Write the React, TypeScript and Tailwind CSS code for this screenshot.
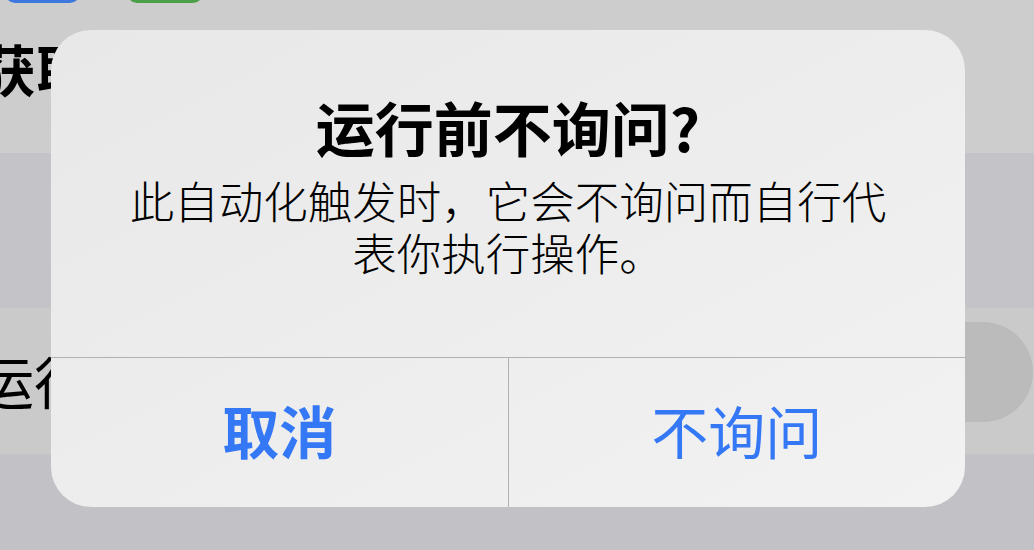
import React from "react";

export default function App() {
  const font = { fontFamily: '"Noto Sans CJK SC", "Noto Sans", sans-serif' };
  return (
    <div
      className="relative w-[1034px] h-[550px] overflow-hidden bg-[#c2c2c6] flex flex-col"
      style={font}
    >
      {/* Background page */}
      <div className="h-[153px] bg-[#cdcdcd] flex flex-col">
        <div className="flex h-[3px] overflow-visible">
          <div className="ml-[5px] w-[75px] h-[20px] -mt-[17px] rounded-[12px] bg-[#3d78de]" />
          <div className="ml-[47px] w-[76px] h-[20px] -mt-[17px] rounded-[12px] bg-[#4b9f46]" />
        </div>
        <div className="mt-[31px] -ml-[20px] text-[56px] leading-[68px] font-bold text-black whitespace-nowrap">
          获取
        </div>
      </div>
      <div className="h-[155px] bg-[#c4c4c8]" />
      <div className="h-[146px] bg-[#cacaca] flex items-start justify-between">
        <div className="mt-[38px] -ml-[22px] text-[56px] leading-[68px] text-black whitespace-nowrap">
          运行
        </div>
        <div className="mt-[14px] mr-[1px] w-[220px] h-[100px] rounded-full bg-[#bbbbbb]" />
      </div>
      <div className="flex-1 bg-[#c2c2c6]" />

      {/* Alert overlay */}
      <div className="absolute left-[51px] top-[30px] w-[914px] h-[477px] rounded-[40px] overflow-hidden bg-linear-to-br from-[#e8e8e8] to-[#f2f2f2] flex flex-col">
        <div className="h-[327px] flex flex-col items-center pt-[65px]">
          <div className="text-[59px] leading-[64px] font-bold text-black whitespace-nowrap">
            运行前不询问?
          </div>
          <div className="mt-[15px] text-[44.5px] leading-[52px] font-light text-black text-center whitespace-nowrap">
            此自动化触发时，它会不询问而自行代
            <br />
            表你执行操作。
          </div>
        </div>
        <div className="h-px bg-[#b2b2b2]" />
        <div className="flex-1 flex">
          <div className="flex-1 flex items-center justify-center pb-[6px] text-[57px] font-bold text-[#3478f6]">
            取消
          </div>
          <div className="w-px bg-[#b2b2b2]" />
          <div className="flex-1 flex items-center justify-center pb-[6px] text-[57px] text-[#3478f6]">
            不询问
          </div>
        </div>
      </div>
    </div>
  );
}
